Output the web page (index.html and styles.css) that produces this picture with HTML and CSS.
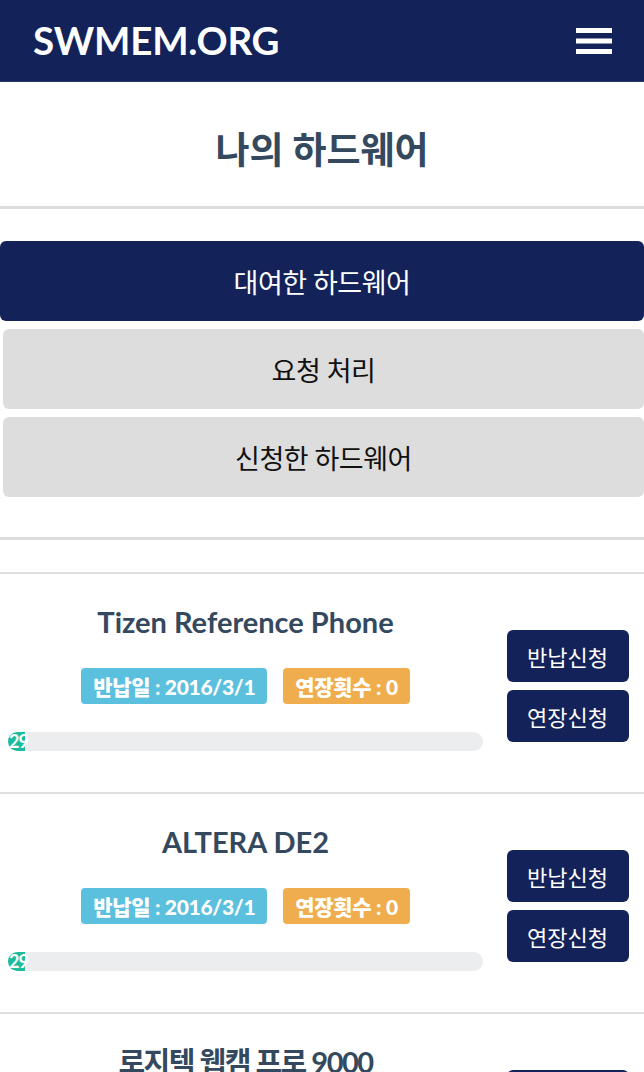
FILE: index.html
```html
<!DOCTYPE html>
<html lang="ko">
<head>
<meta charset="utf-8">
<title>나의 하드웨어 - SWMEM.ORG</title>
<link rel="stylesheet" href="styles.css">
</head>
<body>
<header class="navbar">
  <div class="brand">SWMEM.ORG</div>
  <button class="menu-toggle" aria-label="menu">
    <svg width="36" height="28" viewBox="0 0 36 28"><rect x="0" y="1" width="36" height="5" fill="#fff"/><rect x="0" y="11.5" width="36" height="5" fill="#fff"/><rect x="0" y="22" width="36" height="5" fill="#fff"/></svg>
  </button>
</header>

<section class="page-title">
  <h1>나의 하드웨어</h1>
</section>

<nav class="tabs">
  <a class="tab tab-active">대여한 하드웨어</a>
  <a class="tab">요청 처리</a>
  <a class="tab">신청한 하드웨어</a>
</nav>

<div class="divider"></div>

<ul class="hw-list">
  <li class="hw-item">
    <div class="hw-info">
      <h2 class="hw-name">Tizen Reference Phone</h2>
      <div class="badges">
        <span class="badge badge-info">반납일 : 2016/3/1</span>
        <span class="badge badge-warning">연장횟수 : 0</span>
      </div>
      <div class="progress"><div class="progress-bar" style="width: 17px">29</div></div>
    </div>
    <div class="hw-actions">
      <button class="btn">반납신청</button>
      <button class="btn">연장신청</button>
    </div>
  </li>
  <li class="hw-item">
    <div class="hw-info">
      <h2 class="hw-name">ALTERA DE2</h2>
      <div class="badges">
        <span class="badge badge-info">반납일 : 2016/3/1</span>
        <span class="badge badge-warning">연장횟수 : 0</span>
      </div>
      <div class="progress"><div class="progress-bar" style="width: 17px">29</div></div>
    </div>
    <div class="hw-actions">
      <button class="btn">반납신청</button>
      <button class="btn">연장신청</button>
    </div>
  </li>
  <li class="hw-item">
    <div class="hw-info">
      <h2 class="hw-name hw-name-ko">로지텍 웹캠 프로 9000</h2>
      <div class="badges">
        <span class="badge badge-info">반납일 : 2016/3/1</span>
        <span class="badge badge-warning">연장횟수 : 0</span>
      </div>
      <div class="progress"><div class="progress-bar" style="width: 17px">29</div></div>
    </div>
    <div class="hw-actions">
      <button class="btn">반납신청</button>
      <button class="btn">연장신청</button>
    </div>
  </li>
</ul>
</body>
</html>
```

FILE: styles.css
```css
* { box-sizing: border-box; }
html, body { margin: 0; padding: 0; background: #fff; }
body {
  font-family: Lato, "Noto Sans CJK KR", sans-serif;
  color: #34495e;
  overflow: hidden;
}

.navbar {
  height: 82px;
  background: #13235a;
  border-bottom: 1px solid #2a3a6e;
  display: flex;
  align-items: center;
  justify-content: space-between;
  padding: 0 32px 0 33px;
}
.brand {
  color: #fff;
  font-weight: 700;
  font-size: 38.5px;
  letter-spacing: -0.2px;
  line-height: 1;
}
.menu-toggle {
  background: none;
  border: 0;
  padding: 0;
  display: flex;
}

.page-title {
  height: 127px;
  padding-top: 10px;
  display: flex;
  align-items: center;
  justify-content: center;
  border-bottom: 3px solid #dddddd;
}
.page-title h1 {
  margin: 0;
  font-size: 37px;
  font-weight: 700;
  color: #34495e;
  line-height: 1;
  letter-spacing: 0;
}

.tabs {
  margin-top: 32px;
  display: flex;
  flex-direction: column;
  gap: 8px;
}
.tab {
  height: 80px;
  display: flex;
  align-items: center;
  justify-content: center;
  border-radius: 6px;
  font-size: 27px;
  letter-spacing: -0.5px;
  color: #111;
  background: #dddddd;
  margin-left: 3px;
}
.tab-active {
  background: #13235a;
  color: #fff;
  margin-left: 0;
}

.divider {
  margin-top: 40px;
  border-top: 3px solid #dddddd;
}

.hw-list {
  list-style: none;
  margin: 32px 0 0;
  padding: 0;
}
.hw-item {
  border-top: 2px solid #e0e0e0;
  display: grid;
  grid-template-columns: 491px 1fr;
  height: 220px;
}
.hw-info {
  padding: 30px 8px 41px;
  display: flex;
  flex-direction: column;
  align-items: center;
}
.hw-name {
  margin: 0;
  font-size: 29px;
  line-height: 36px;
  font-weight: 700;
  color: #34495e;
}
.hw-name-ko {
  letter-spacing: -1.5px;
}
.badges {
  margin-top: 28px;
  display: flex;
  gap: 16px;
}
.badge {
  height: 36px;
  display: flex;
  align-items: center;
  padding: 0 12px;
  border-radius: 4px;
  color: #fff;
  font-weight: 900;
  font-size: 21px;
  letter-spacing: -0.3px;
}
.badge-info { background: #5bc0de; }
.badge-warning { background: #f0ad4e; }

.progress {
  margin-top: 28px;
  width: 100%;
  height: 19px;
  background: #ebedef;
  border-radius: 10px;
  display: flex;
}
.progress-bar {
  background: #1abc9c;
  border-radius: 10px 0 0 10px;
  color: #fff;
  font-size: 18px;
  font-weight: 700;
  line-height: 19px;
  white-space: nowrap;
  padding-left: 1px;
  letter-spacing: -1px;
  overflow: visible;
}

.hw-actions {
  padding-top: 56px;
  display: flex;
  flex-direction: column;
  align-items: center;
  gap: 8px;
}
.btn {
  width: 122px;
  height: 52px;
  border: 0;
  border-radius: 6px;
  background: #13235a;
  color: #fff;
  font-family: Lato, "Noto Sans CJK KR", sans-serif;
  font-size: 22px;
  padding: 0;
}
```
